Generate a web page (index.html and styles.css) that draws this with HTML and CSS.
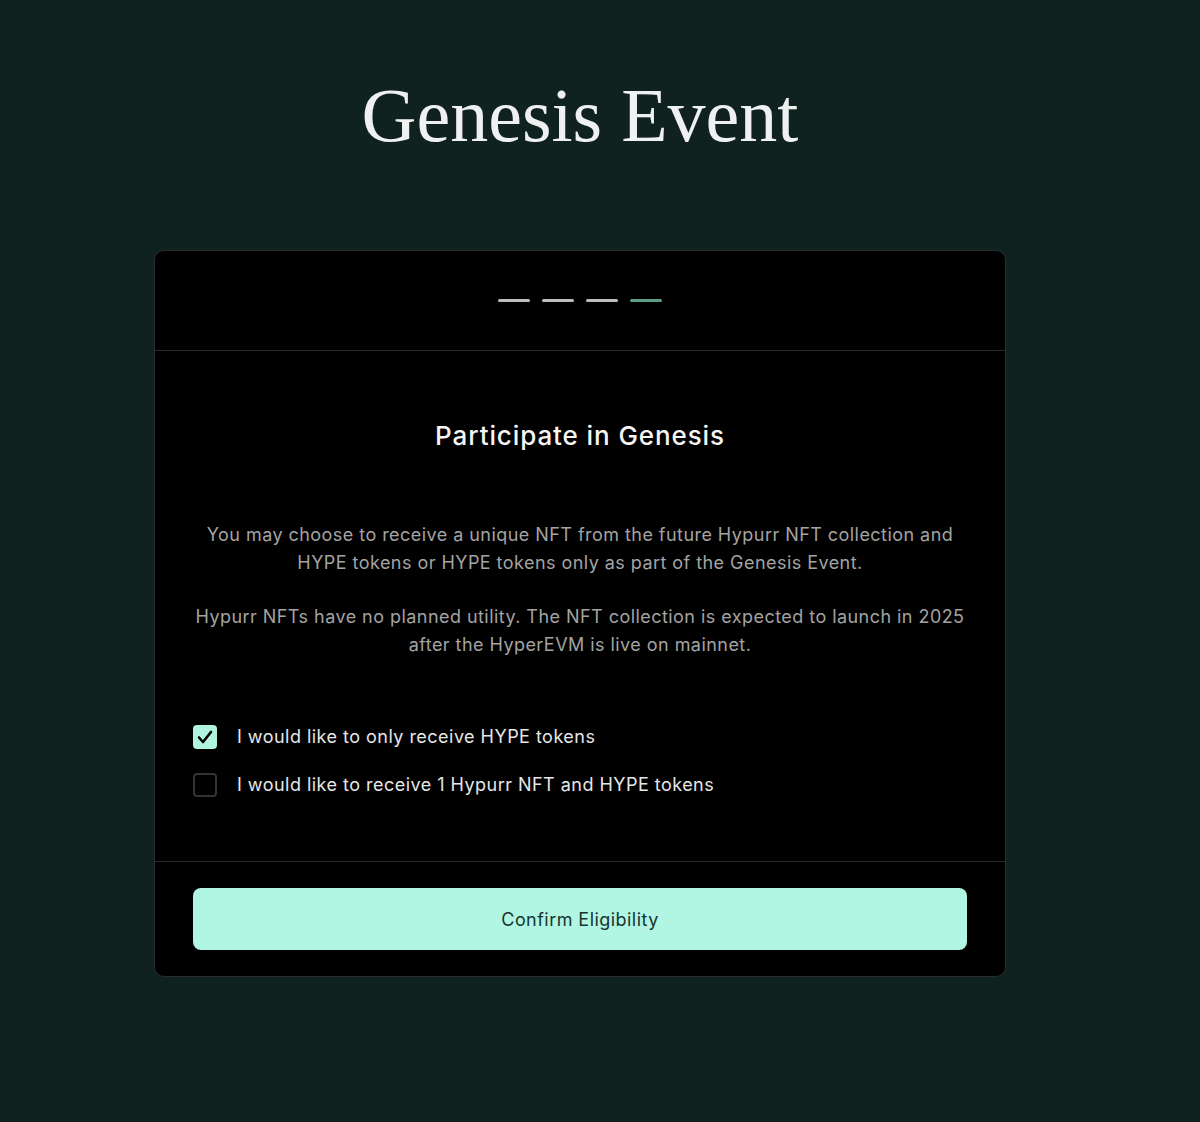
FILE: index.html
```html
<!DOCTYPE html>
<html lang="en">
<head>
    <meta charset="UTF-8">
    <meta name="viewport" content="width=device-width, initial-scale=1.0">
    <title>Genesis Event</title>
    <link rel="stylesheet" href="styles.css">
</head>
<body>
    <main class="page">
        <h1 class="page-title">Genesis Event</h1>

        <div class="genesis-card">
            <div class="card-steps">
                <span class="step"></span>
                <span class="step"></span>
                <span class="step"></span>
                <span class="step active"></span>
            </div>

            <div class="card-body">
                <h2>Participate in Genesis</h2>
                <p>You may choose to receive a unique NFT from the future Hypurr NFT collection and HYPE tokens or HYPE tokens only as part of the Genesis Event.</p>
                <p>Hypurr NFTs have no planned utility. The NFT collection is expected to launch in 2025 after the HyperEVM is live on mainnet.</p>

                <div class="options">
                    <label class="option">
                        <span class="checkbox checked">
                            <svg viewBox="0 0 24 24" width="24" height="24"><path d="M6 12.5l4 4.5 8-10" fill="none" stroke="#000" stroke-width="2.6" stroke-linecap="round" stroke-linejoin="round"/></svg>
                        </span>
                        I would like to only receive HYPE tokens
                    </label>
                    <label class="option">
                        <span class="checkbox"></span>
                        I would like to receive 1 Hypurr NFT and HYPE tokens
                    </label>
                </div>
            </div>

            <div class="card-footer">
                <button type="button">Confirm Eligibility</button>
            </div>
        </div>
    </main>
</body>
</html>
```

FILE: styles.css
```css
body {
    margin: 0;
    background-color: #0f221f;
    font-family: Inter, "Noto Sans", sans-serif;
    height: 1122px;
}

.page {
    width: 1160px;
    display: flex;
    flex-direction: column;
    align-items: center;
}

.page-title {
    font-family: "Liberation Serif", "Times New Roman", serif;
    font-weight: normal;
    font-size: 76px;
    line-height: 90px;
    color: #eef1f0;
    margin: 70px 0 0;
}

.genesis-card {
    margin-top: 90px;
    width: 852px;
    background-color: #000;
    border: 1px solid #2a2d2c;
    border-radius: 10px;
    box-sizing: border-box;
}

.card-steps {
    height: 99px;
    display: flex;
    justify-content: center;
    align-items: center;
    gap: 12px;
    border-bottom: 1px solid #2b2b2b;
}

.step {
    width: 32px;
    height: 3px;
    border-radius: 2px;
    background-color: #bdbdbd;
}

.step.active {
    background-color: #5c9d89;
}

.card-body {
    padding: 69px 38px 64px;
    text-align: center;
    border-bottom: 1px solid #2b2b2b;
}

.card-body h2 {
    margin: 0 0 69px;
    font-size: 26px;
    line-height: 32px;
    font-weight: 500;
    letter-spacing: 0.9px;
    color: #f5f5f5;
}

.card-body p {
    margin: 0 0 26px;
    font-size: 18px;
    line-height: 28px;
    letter-spacing: 0.45px;
    color: #a3a3a3;
}

.options {
    margin-top: 66px;
    display: flex;
    flex-direction: column;
    gap: 24px;
    text-align: left;
}

.option {
    display: flex;
    align-items: center;
    gap: 20px;
    font-size: 18px;
    line-height: 24px;
    letter-spacing: 0.47px;
    color: #e6e6e6;
}

.checkbox {
    width: 24px;
    height: 24px;
    box-sizing: border-box;
    border: 2px solid #333;
    border-radius: 4px;
    display: flex;
}

.checkbox.checked {
    background-color: #aef4df;
    border: none;
}

.card-footer {
    padding: 26px 38px;
}

.card-footer button {
    width: 100%;
    height: 62px;
    border: none;
    border-radius: 8px;
    background-color: #b0f6e3;
    color: #173530;
    font-family: Inter, "Noto Sans", sans-serif;
    font-size: 18px;
    letter-spacing: 0.45px;
    cursor: pointer;
}
```
